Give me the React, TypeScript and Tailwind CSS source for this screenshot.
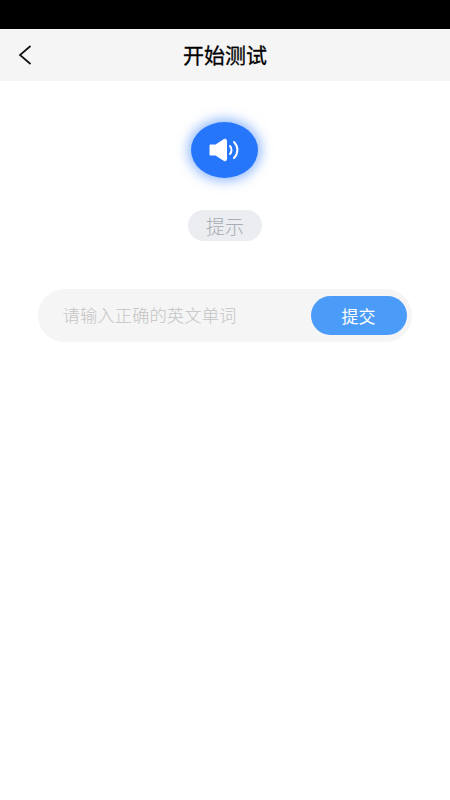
export default function App() {
  return (
    <div className="w-[450px] h-[800px] bg-white flex flex-col items-center overflow-hidden font-['Noto_Sans_CJK_SC','Noto_Sans',sans-serif]">
      <div className="w-full h-[29px] bg-black shrink-0" />
      <div className="w-full h-[52px] bg-[#f5f5f5] shrink-0 flex items-center relative justify-center">
        <svg className="absolute left-[17px] top-[16px]" width="16" height="20" viewBox="0 0 16 20" fill="none">
          <path d="M13.5 1 L3 10 L13.5 19" stroke="#111" strokeWidth="1.7" />
        </svg>
        <span className="text-[21px] font-normal text-black leading-none [-webkit-text-stroke:0.3px_#000] -mt-[2px]">开始测试</span>
      </div>
      <div className="mt-[41px] mr-[1px] w-[67px] h-[56px] rounded-[50%] bg-[#2676fb] shadow-[0_0_12px_3px_rgba(38,118,251,0.5)] flex items-center justify-center shrink-0">
        <svg width="32" height="24" viewBox="0 0 32 24" fill="none">
          <path d="M1 7 H6.5 L15 1.5 C16.5 0.8 17.5 1.5 17.5 2.5 V21.5 C17.5 22.5 16.5 23.2 15 22.5 L6.5 17 H1 Z" fill="#fff" stroke="#fff" strokeLinejoin="round" />
          <path d="M21 8 C23 10 23 14 21 16" stroke="#fff" strokeWidth="2" strokeLinecap="round" />
          <path d="M25 4 C29.5 8.5 29.5 15.5 25 20" stroke="#fff" strokeWidth="2" strokeLinecap="round" />
        </svg>
      </div>
      <div className="mt-[32px] w-[74px] h-[31px] rounded-full bg-[#ebedf0] flex items-center justify-center text-[19px] font-light text-[#a8acb3] shrink-0 leading-none">
        提示
      </div>
      <div className="mt-[48px] mr-[1px] w-[374px] h-[53px] rounded-full bg-[#f5f5f5] flex items-center justify-between pl-[25px] pr-[5px] shrink-0">
        <span className="text-[17.4px] font-light text-[#c4c4c4] leading-none -mt-[2px]">请输入正确的英文单词</span>
        <div className="w-[96px] h-[39px] rounded-full bg-[#4b9cf8] flex items-center justify-center text-white text-[17px] leading-none">
          提交
        </div>
      </div>
    </div>
  );
}
